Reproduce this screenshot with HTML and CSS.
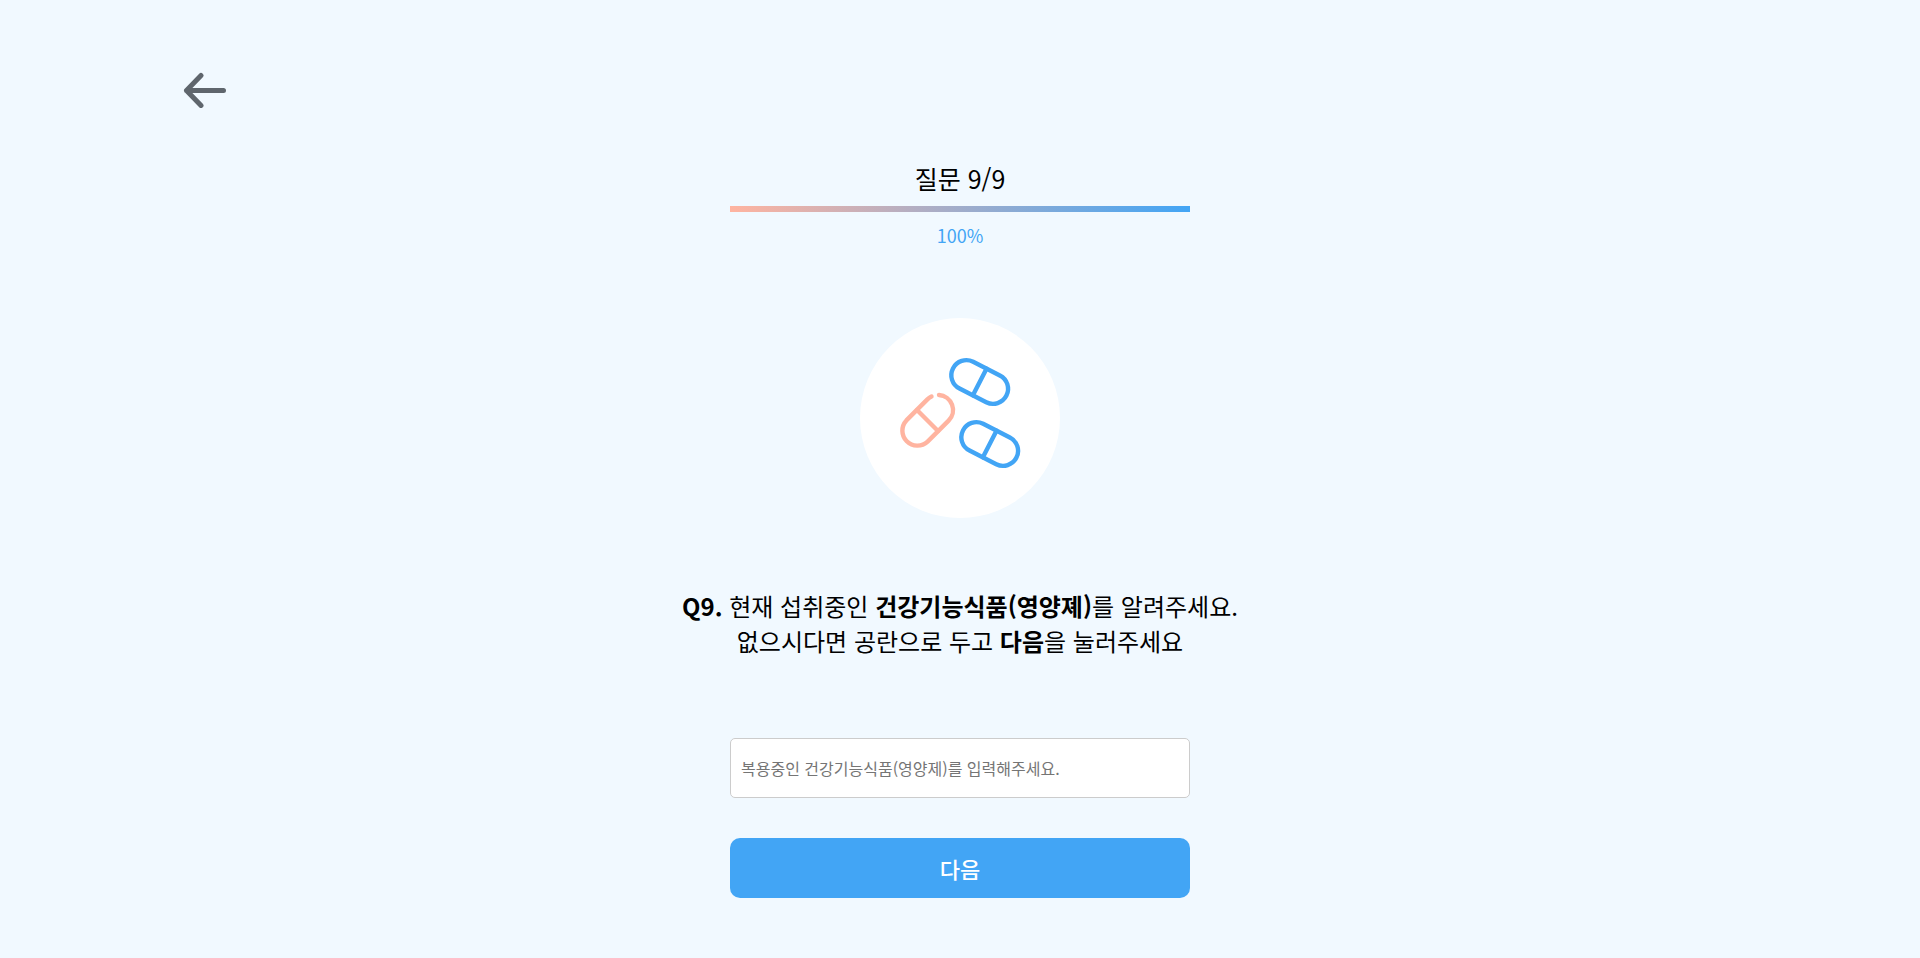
FILE: index.html
```html
<!DOCTYPE html>
<html lang="ko">
<head>
  <meta charset="UTF-8" />
  <meta name="viewport" content="width=device-width, initial-scale=1.0" />
  <title>질문 9/9</title>
  <link rel="stylesheet" href="styles.css">
</head>
<body>
  <header class="top">
    <button type="button" class="back" aria-label="뒤로">
      <svg width="46" height="36" viewBox="0 0 46 36" fill="none" stroke="#5f666d" stroke-width="5" stroke-linecap="round" stroke-linejoin="round">
        <path d="M41.5 18.5H4.5M19 3.500L4.500 18.500L19 33.500" />
      </svg>
    </button>
  </header>

  <main class="survey">
    <section class="progress">
      <h1 class="progress-title">질문 9/9</h1>
      <div class="progress-bar"><div class="progress-fill" style="width: 100%"></div></div>
      <p class="progress-percent">100%</p>
    </section>

    <div class="circle">
      <svg viewBox="0 0 200 200" fill="none" stroke-width="4.4" stroke-linecap="round">
        <g stroke="#42a5f5">
          <g transform="translate(119.7 64) rotate(27)">
            <rect x="-30" y="-15" width="60" height="30" rx="15" />
            <path d="M0 -15V15" />
          </g>
          <g transform="translate(129.7 126) rotate(27)">
            <rect x="-30" y="-15" width="60" height="30" rx="15" />
            <path d="M0 -15V15" />
          </g>
        </g>
        <g stroke="#ffb4a0">
          <path d="M79 77A15 15 0 0 1 88.6 102.6L67.6 123.6A15 15 0 0 1 46.4 102.4L67.4 81.4A15 15 0 0 1 71.500 78.500" />
          <path d="M57 92L78 113" />
        </g>
      </svg>
    </div>

    <form class="question">
      <label for="supplement" class="question-text">
        <b>Q9.</b> 현재 섭취중인 <b>건강기능식품(영양졔)</b>를 알려주세요.<br>
        없으시다면 공란으로 두고 <b>다음</b>을 눌러주세요
      </label>
      <input type="text" id="supplement" class="answer" placeholder="복용중인 건강기능식품(영양제)를 입력해주세요." />
      <button type="button" class="next">다음</button>
    </form>
  </main>
</body>
</html>
```

FILE: styles.css
```css
* {
  box-sizing: border-box;
}

body {
  margin: 0;
  font-family: "Noto Sans CJK KR", sans-serif;
  color: #000;
  background-color: #f1f9ff;
}

.top {
  padding: 72px 182px 0;
}

.back {
  display: block;
  padding: 0;
  border: none;
  background: none;
  cursor: pointer;
}

.back svg {
  display: block;
}

.survey {
  display: flex;
  flex-direction: column;
  align-items: center;
  padding: 52px 20px 60px;
}

.progress {
  width: 100%;
  max-width: 460px;
  text-align: center;
}

.progress-title {
  margin: 0 0 10px;
  font-size: 25px;
  font-weight: 400;
  line-height: 36px;
}

.progress-bar {
  height: 6px;
}

.progress-fill {
  height: 100%;
  background: linear-gradient(to right, #ffb4a0, #42a5f5);
}

.progress-percent {
  margin: 10px 0 0;
  font-size: 18px;
  line-height: 26px;
  color: #42a5f5;
}

.circle {
  width: 200px;
  height: 200px;
  margin-top: 70px;
  border-radius: 50%;
  background-color: #fff;
}

.question {
  display: flex;
  flex-direction: column;
  align-items: center;
  width: 100%;
  margin-top: 70px;
}

.question-text {
  font-size: 24px;
  line-height: 35px;
  text-align: center;
}

.answer,
.next {
  width: 100%;
  max-width: 460px;
  height: 60px;
  font-family: inherit;
}

.answer {
  margin-top: 80px;
  padding: 0 10px;
  border: 1px solid #ccc;
  border-radius: 5px;
  font-size: 16px;
  background-color: #fff;
}

.next {
  margin-top: 40px;
  border: none;
  border-radius: 10px;
  font-size: 22px;
  font-weight: 500;
  color: #fff;
  background-color: #42a5f5;
  cursor: pointer;
}
```
